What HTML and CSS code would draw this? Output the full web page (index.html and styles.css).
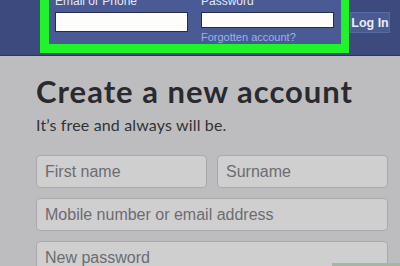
FILE: index.html
```html
<!DOCTYPE html>
<html>
<head>
<meta charset="utf-8">
<link rel="stylesheet" href="styles.css">
</head>
<body>
<header class="topbar">
  <div class="login-box">
    <div class="login-inner">
      <div class="field">
        <label class="label">Email or Phone</label>
        <div class="top-input"></div>
      </div>
      <div class="field">
        <label class="label">Password</label>
        <div class="top-input"></div>
        <a class="forgot">Forgotten account?</a>
      </div>
    </div>
  </div>
  <button class="login-btn">Log In</button>
</header>
<main class="signup">
  <h1 class="title">Create a new account</h1>
  <p class="subtitle">It’s free and always will be.</p>
  <div class="form">
    <div class="input">First name</div>
    <div class="input">Surname</div>
    <div class="input wide">Mobile number or email address</div>
    <div class="input wide">New password</div>
  </div>
  <div class="green-strip"></div>
</main>
</body>
</html>
```
FILE: styles.css
```css
html, body {
  margin: 0;
  padding: 0;
  height: 100%;
  overflow: hidden;
}
body {
  background: #bdbdbf;
  font-family: "Liberation Sans", Arial, sans-serif;
  position: relative;
}
.topbar {
  height: 55px;
  background: #3d4a7d;
  border-bottom: 1px solid #2c3660;
  display: flex;
  align-items: flex-start;
  padding-left: 40px;
  box-sizing: content-box;
}
.login-box {
  margin-top: -14px;
  border: 9px solid #1ff42b;
  border-top-width: 8px;
  border-right-width: 8px;
  background: #4a5a95;
  width: 292px;
}
.login-inner {
  height: 50px;
  overflow: hidden;
  display: flex;
  gap: 13px;
  padding-left: 6px;
}
.field {
  display: flex;
  flex-direction: column;
  width: 133px;
}
.label {
  font-size: 12px;
  line-height: 14px;
  color: #e4e8f3;
}
.top-input {
  margin-top: 4px;
  height: 18px;
  background: #fdfdfb;
  border: 1px solid #252c52;
}
.forgot {
  margin-top: 3px;
  font-size: 11px;
  line-height: 13px;
  color: #9db2e4;
  white-space: nowrap;
}
.login-btn {
  margin-top: 12px;
  margin-left: 1px;
  width: 40px;
  height: 21px;
  padding: 0;
  background: #4a5b94;
  border: 1px solid #566aa3;
  color: #e9ecf6;
  font-family: "Liberation Sans", Arial, sans-serif;
  font-weight: bold;
  font-size: 12.5px;
}
.signup {
  padding: 0 12px 0 36px;
}
.title {
  margin: 18px 0 0;
  font-family: Lato, sans-serif;
  font-weight: bold;
  font-size: 31px;
  letter-spacing: 1px;
  line-height: 34px;
  color: #2a2a2e;
}
.subtitle {
  margin: 7px 0 0;
  font-family: Lato, sans-serif;
  font-size: 16px;
  letter-spacing: 0.15px;
  line-height: 20px;
  color: #333336;
}
.form {
  margin-top: 20px;
  display: grid;
  grid-template-columns: 1fr 1fr;
  gap: 10px;
}
.input {
  height: 31px;
  box-sizing: content-box;
  background: #cfcfd0;
  border: 1px solid #a9a9ac;
  border-radius: 4px;
  padding-left: 8px;
  font-size: 16px;
  line-height: 31px;
  color: #6c6c70;
}
.wide {
  grid-column: 1 / 3;
}
.green-strip {
  position: absolute;
  left: 332px;
  top: 263px;
  width: 68px;
  height: 10px;
  background: #a3b89e;
}
```
